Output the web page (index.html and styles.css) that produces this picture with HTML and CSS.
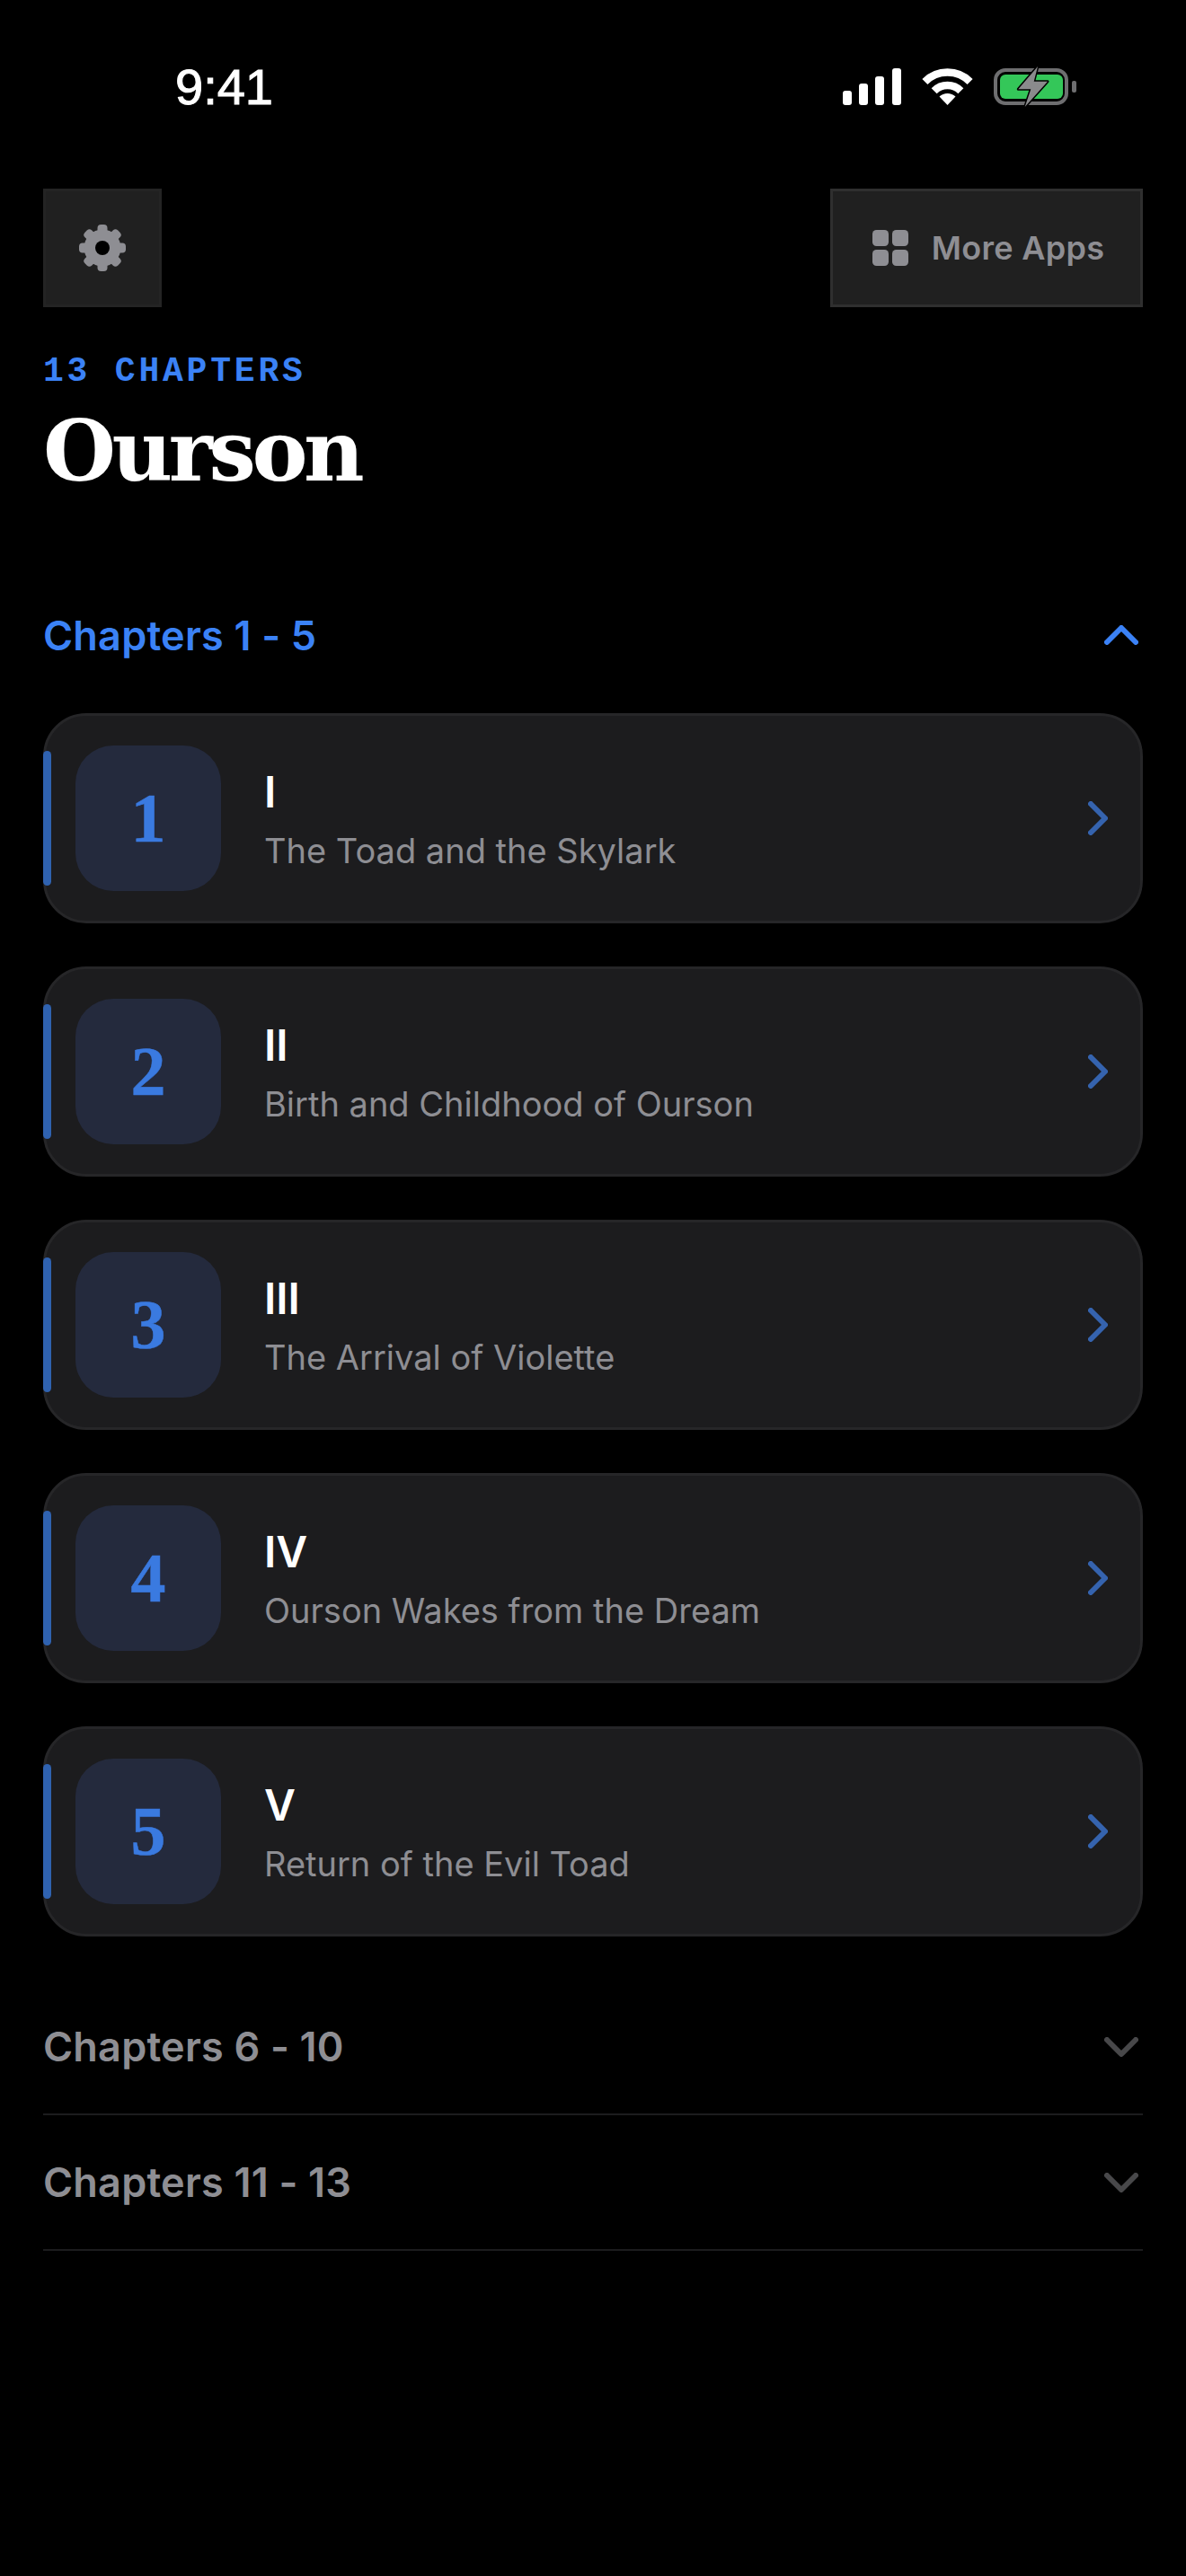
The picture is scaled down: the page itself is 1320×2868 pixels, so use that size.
FILE: index.html
```html
<!DOCTYPE html>
<html lang="en">
<head>
<meta charset="utf-8">
<title>Ourson</title>
<link rel="stylesheet" href="styles.css">
</head>
<body>
<svg class="sprite" width="0" height="0" aria-hidden="true">
  <symbol id="chev-right" viewBox="0 0 22 38"><path d="M3 3l16 16L3 35" fill="none" stroke="currentColor" stroke-width="6" stroke-linecap="round" stroke-linejoin="round"/></symbol>
  <symbol id="chev-v" viewBox="0 0 38 22"><path d="M3 3l16 16L35 3" fill="none" stroke="currentColor" stroke-width="6" stroke-linecap="round" stroke-linejoin="round"/></symbol>
</svg>
<header class="status">
  <span class="time">9:41</span>
  <div class="status-icons">
    <svg class="signal" width="65" height="41" viewBox="0 0 65 41"><rect x="0" y="25" width="10" height="16" rx="3"/><rect x="18" y="17" width="10" height="24" rx="3"/><rect x="36" y="9" width="10" height="32" rx="3"/><rect x="55" y="0" width="10" height="41" rx="3"/></svg>
    <svg class="wifi" width="57" height="41" viewBox="0 0 57 41"><path d="M3.4 14.9a35.5 35.5 0 0 1 50.2 0M13.65 25.15a21 21 0 0 1 29.7 0" fill="none" stroke="#fff" stroke-width="8.5"/><path d="M28.5 41L19.5 31.5a13 13 0 0 1 18 0z" fill="#fff"/></svg>
    <svg class="battery" width="92" height="41" viewBox="0 0 92 41"><rect x="2" y="2" width="79" height="37" rx="11" fill="none" stroke="#6e6e70" stroke-width="4"/><rect x="7" y="7" width="70" height="27" rx="6" fill="#34c759"/><rect x="87" y="14" width="5" height="13" rx="2" fill="#6e6e70"/><path d="M49-2L27.3 23.3H41.3L34.7 43 60 14.7H44.7z" fill="#8a8a8c" stroke="#000" stroke-width="3" paint-order="stroke" stroke-linejoin="round"/></svg>
  </div>
</header>
<main class="page">
  <div class="toolbar">
    <button class="tool tool-gear" type="button" aria-label="Settings">
      <svg width="60" height="60" viewBox="-30 -30 60 60"><g fill="#8e8e93"><rect x="-5.5" y="-26" width="11" height="52" rx="4"/><rect x="-5.5" y="-26" width="11" height="52" rx="4" transform="rotate(45)"/><rect x="-5.5" y="-26" width="11" height="52" rx="4" transform="rotate(90)"/><rect x="-5.5" y="-26" width="11" height="52" rx="4" transform="rotate(135)"/></g><circle r="20.5" fill="#8e8e93"/><circle r="8" fill="#000"/></svg>
    </button>
    <button class="tool tool-apps" type="button">
      <svg width="40" height="40" viewBox="0 0 40 40" fill="#8e8e93"><rect width="18" height="18" rx="4.5"/><rect x="22" width="18" height="18" rx="4.5"/><rect y="22" width="18" height="18" rx="4.5"/><rect x="22" y="22" width="18" height="18" rx="4.5"/></svg>
      <span>More Apps</span>
    </button>
  </div>
  <p class="eyebrow">13 CHAPTERS</p>
  <h1 class="title">Ourson</h1>

  <section class="group">
    <div class="group-head group-head-open">
      <span>Chapters 1 - 5</span>
      <svg class="chev-v chev-up" width="38" height="22"><use href="#chev-v"/></svg>
    </div>
    <ul class="cards">
      <li class="card"><span class="bar"></span><span class="badge">1</span><div class="info"><span class="roman">I</span><span class="name">The Toad and the Skylark</span></div><svg class="chev-r" width="22" height="38"><use href="#chev-right"/></svg></li>
      <li class="card"><span class="bar"></span><span class="badge">2</span><div class="info"><span class="roman">II</span><span class="name">Birth and Childhood of Ourson</span></div><svg class="chev-r" width="22" height="38"><use href="#chev-right"/></svg></li>
      <li class="card"><span class="bar"></span><span class="badge">3</span><div class="info"><span class="roman">III</span><span class="name">The Arrival of Violette</span></div><svg class="chev-r" width="22" height="38"><use href="#chev-right"/></svg></li>
      <li class="card"><span class="bar"></span><span class="badge">4</span><div class="info"><span class="roman">IV</span><span class="name">Ourson Wakes from the Dream</span></div><svg class="chev-r" width="22" height="38"><use href="#chev-right"/></svg></li>
      <li class="card"><span class="bar"></span><span class="badge">5</span><div class="info"><span class="roman">V</span><span class="name">Return of the Evil Toad</span></div><svg class="chev-r" width="22" height="38"><use href="#chev-right"/></svg></li>
    </ul>
  </section>
  <div class="group-head group-head-closed"><span>Chapters 6 - 10</span><svg class="chev-v" width="38" height="22"><use href="#chev-v"/></svg></div>
  <div class="group-head group-head-closed"><span>Chapters 11 - 13</span><svg class="chev-v" width="38" height="22"><use href="#chev-v"/></svg></div>
</main>
</body>
</html>
```
FILE: styles.css
```css
* { box-sizing: border-box; }
html, body { margin: 0; background: #000; }
body { font-family: Inter, "Noto Sans", sans-serif; color: #fff; height: 2868px; overflow: hidden; }
.sprite { position: absolute; }

.status { height: 210px; padding: 76px 122px 0 195px; display: flex; justify-content: space-between; align-items: flex-start; }
.time { font-family: "Liberation Sans", sans-serif; font-size: 56px; line-height: 41px; font-weight: 400; -webkit-text-stroke: 1px #fff; }
.status-icons { display: flex; gap: 23px; }
.signal { fill: #fff; }
.battery { overflow: visible; }

.page { padding: 0 48px; }
.toolbar { display: flex; justify-content: space-between; height: 132px; }
.tool { display: flex; align-items: center; justify-content: center; background: #202020; color: #8e8e93; font-family: inherit; padding: 0; height: 132px; }
.tool-gear { width: 132px; border: 3px solid #242424; }
.tool-apps { width: 348px; gap: 26px; padding-left: 4px; border: 3px solid #2f2f2f; font-size: 36px; font-weight: 600; letter-spacing: 0.3px; }

.eyebrow { margin: 0; padding-top: 54px; font-family: "Liberation Mono", monospace; font-weight: 700; font-size: 38px; line-height: 36px; letter-spacing: 3.8px; color: #3b82f6; }
.title { margin: 0; padding-top: 11px; font-family: "DejaVu Serif", serif; font-weight: 700; font-size: 93px; line-height: 120px; letter-spacing: -4.4px; color: #fff; }

.group { margin-top: 69px; }
.group-head { display: flex; align-items: center; justify-content: space-between; height: 150px; font-size: 45px; font-weight: 600; letter-spacing: 0.2px; }
.group-head-open { color: #3b82f6; }
.group-head-closed { height: 151px; color: #8e8e93; border-bottom: 2px solid #1c1c1e; }
.chev-v { color: #48484a; margin-right: 5px; }
.chev-up { color: #3b82f6; transform: scaleY(-1); }

.cards { list-style: none; margin: 12px 0 48px; padding: 0; display: flex; flex-direction: column; gap: 48px; }
.card { position: relative; height: 234px; display: flex; align-items: center; background: #1c1c1e; border: 3px solid #262628; border-radius: 48px; padding: 0 36px 0 33px; }
.bar { position: absolute; left: -3px; top: 39px; width: 9px; height: 150px; border-radius: 5px; background: #2f62b0; }
.badge { width: 162px; height: 162px; flex: none; display: flex; align-items: center; justify-content: center; border-radius: 42px; background: #242a3d; color: #3a7ae0; font-family: "Liberation Serif", serif; font-weight: 700; font-size: 78px; -webkit-text-stroke: 0.5px #3a7ae0; }
.info { flex: 1; margin-left: 48px; padding-top: 3px; display: flex; flex-direction: column; gap: 11px; }
.roman { font-size: 48px; line-height: 58px; font-weight: 600; color: #fff; }
.name { font-size: 38px; line-height: 50px; color: #8e8e93; }
.chev-r { color: #3563ae; flex: none; }
```
